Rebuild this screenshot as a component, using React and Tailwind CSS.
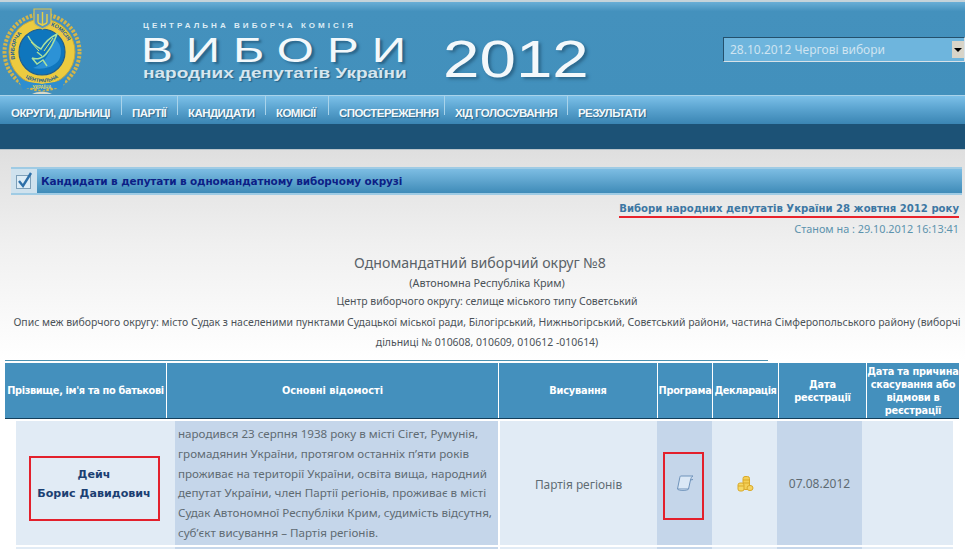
import React from "react";

const navItems = [
  { label: "ОКРУГИ, ДІЛЬНИЦІ", width: "w-[121px]" },
  { label: "ПАРТІЇ", width: "w-[56px]" },
  { label: "КАНДИДАТИ", width: "w-[88px]" },
  { label: "КОМІСІЇ", width: "w-[63px]" },
  { label: "СПОСТЕРЕЖЕННЯ", width: "w-[116px]" },
  { label: "ХІД ГОЛОСУВАННЯ", width: "w-[123px]" },
  { label: "РЕЗУЛЬТАТИ", width: "w-[90px]" },
];

const Logo = () => (
  <svg width="84" height="94" viewBox="0 0 84 94" className="shrink-0">
    <defs>
      <path id="ringLeft" d="M15 60 A27.5 27.5 0 0 1 38 23" />
      <path id="ringRight" d="M46 23 A27.5 27.5 0 0 1 67 60" />
      <path id="ringBottom" d="M12 58 A30 30 0 0 0 70 58" />
    </defs>
    <circle cx="41" cy="50" r="37.5" fill="none" stroke="#d3b54a" strokeWidth="4" strokeDasharray="2.5 1.5" />
    <circle cx="41" cy="50" r="33" fill="#eccb3f" stroke="#c9a93a" strokeWidth="1" />
    <circle cx="41" cy="50" r="23" fill="#0f76bd" stroke="#1f5f90" strokeWidth="1.2" />
    <path d="M52 36 C60 40 62 50 58 58 C52 66 40 68 32 66 C44 62 50 50 52 36Z" fill="#2c92d6" />
    <path d="M27 34 C30 40 34 44 40 47 C44 40 50 35 56 32 C53 40 50 46 45 52 C42 56 36 58 31 56 M31 56 L36 62 L42 58 L46 64 M36 50 L41 54" fill="none" stroke="#a9e0a0" strokeWidth="1.5" />
    <path d="M30 40 L38 49 M52 36 L43 49" fill="none" stroke="#d8ea70" strokeWidth="1" />
    <text fontFamily="'Liberation Sans', sans-serif" fontSize="5.5" fontWeight="700" fill="#1d5e96">
      <textPath href="#ringLeft" startOffset="6%">ВИБОРЧА</textPath>
    </text>
    <text fontFamily="'Liberation Sans', sans-serif" fontSize="5.5" fontWeight="700" fill="#1d5e96">
      <textPath href="#ringRight" startOffset="8%">КОМІСІЯ</textPath>
    </text>
    <text fontFamily="'Liberation Sans', sans-serif" fontSize="5" fontWeight="700" fill="#1d5e96" textAnchor="middle">
      <textPath href="#ringBottom" startOffset="50%">ЦЕНТРАЛЬНА</textPath>
    </text>
    <path d="M33 7 H50 V20 C50 24 44 25 41.5 27 C39 25 33 24 33 20Z" fill="#5b95bd" stroke="#d8c24e" strokeWidth="1.2" />
    <path d="M41.5 10 V24 M37 12 V20 C37 22 40 22 41.5 23 C43 22 46 22 46 20 V12" stroke="#e6cf45" strokeWidth="1.4" fill="none" />
    <path d="M16 75 C24 81 32 80 41 82 C50 80 58 81 66 75 L60 88 C52 84 47 86 41 89 C35 86 30 84 22 88Z" fill="#2e8ed0" />
    <text x="41" y="87" textAnchor="middle" fontFamily="'Liberation Sans', sans-serif" fontSize="4.5" fontWeight="700" fill="#e8d860">УКРАЇНА</text>
    <path d="M31 92 C37 89 45 89 51 92Z" fill="#d8d8c8" />
  </svg>
);

const CheckIcon = () => (
  <svg width="20" height="20" viewBox="0 0 20 20">
    <rect x="2.5" y="4.5" width="14" height="13" fill="#dcecf6" stroke="#7d9fb8" />
    <path d="M5 10 L9 15 L17 2" fill="none" stroke="#2d6fa8" strokeWidth="2.4" />
  </svg>
);

const ScrollIcon = () => (
  <svg width="18" height="18" viewBox="0 0 18 18">
    <path d="M4.5 2 H17 C15.5 2.5 15 4 14.5 6 L12.5 15 H1.5 L3.5 5 C3.8 3.5 4 2.5 4.5 2Z" fill="#dbe8f6" stroke="#6f93bb" />
    <path d="M1.5 15 C2 16.8 12 16.8 12.5 15" fill="#b8cde4" stroke="#6f93bb" />
    <path d="M14.5 6 L17 5.5" stroke="#6f93bb" />
  </svg>
);

const CoinsIcon = () => (
  <svg width="18" height="18" viewBox="0 0 18 18">
    <rect x="7" y="1.5" width="6.5" height="13" rx="2" fill="#f4cf55" stroke="#d9a92a" />
    <rect x="2" y="8" width="6" height="8" rx="2" fill="#f6d865" stroke="#d9a92a" />
    <ellipse cx="14" cy="13" rx="3" ry="2.6" fill="#f4d260" stroke="#d9a92a" />
    <path d="M7 5 H13.5 M7 8 H13.5 M2 11 H8" stroke="#d9a92a" />
  </svg>
);

const HeaderCell = ({ className = "", children }) => (
  <div className={`flex items-center justify-center bg-[#4490bd] text-center font-bold text-white ${className}`}>
    {children}
  </div>
);

export default function App() {
  return (
    <div className="h-[549px] w-[965px] overflow-hidden bg-white font-['Noto_Sans',sans-serif] text-[12px] text-[#5f6b73]">
      {/* шапка */}
      <div className="flex h-[95px] items-start border-t-2 border-[#c5d3da] bg-[linear-gradient(#69aed6,#4491bd_10%,#4290bc)] pl-px">
        <Logo />
        <div className="ml-[58px] w-[280px] pt-[17px] font-['Liberation_Sans',sans-serif] text-[#dcecf5]">
          <div className="h-[13px] text-[8px] leading-[13px] font-bold tracking-[3.05px] whitespace-nowrap">ЦЕНТРАЛЬНА ВИБОРЧА КОМІСІЯ</div>
          <div className="mt-[3px] h-[30px] origin-left -translate-x-[2px] scale-x-[1.36] text-[35px] leading-[30px] tracking-[9.6px] whitespace-nowrap text-[#f3f8fb] [text-shadow:2px_2px_2px_#2a6488]">ВИБОРИ</div>
          <div className="mt-[1px] h-[15px] origin-left scale-x-[1.31] text-[14.5px] leading-[15px] font-bold whitespace-nowrap text-[#d6e6ef] [text-shadow:1px_1px_1px_#2a6488]">народних депутатів України</div>
        </div>
        <div className="ml-[20px] origin-left scale-x-[1.26] pt-[27px] font-['Liberation_Sans',sans-serif] text-[52px] leading-[60px] whitespace-nowrap text-[#f3f8fb] [text-shadow:2px_2px_3px_#2a6488]">2012</div>
        <div className="ml-auto mt-[35px] flex h-[25px] w-[242px] items-center border border-t-[#24506c] border-r-[#d8e2e8] border-b-[#d8e2e8] border-l-[#24506c] bg-[#6eb5dd] pl-[6px] text-[12px] text-[#cfe4f1]">
          <span className="flex-1 pt-px">28.10.2012 Чергові вибори</span>
          <span className="flex h-[17px] w-[12px] items-center justify-center bg-[#d8d4c8]">
            <span className="h-0 w-0 border-x-[4px] border-t-[4px] border-x-transparent border-t-black" />
          </span>
        </div>
      </div>

      {/* меню */}
      <div className="flex h-[29px] items-start border-t border-[#a9d3ea] bg-[linear-gradient(#7cc0e8,#5ba4d0_45%,#3a85b3)] pl-px font-['Liberation_Sans',sans-serif] text-[11.5px] leading-[29px] font-bold tracking-[-0.55px] whitespace-nowrap text-[#f2f8fb]">
        {navItems.map((item, i) => (
          <div key={item.label} className={`flex h-[19px] items-center pt-[10px] pl-[10px] ${item.width} ${i < navItems.length - 1 ? "border-r border-[#a9d3ea]" : ""}`}>
            <span className="translate-y-[3px] [text-shadow:1px_1px_1px_#2a6488]">{item.label}</span>
          </div>
        ))}
      </div>
      <div className="h-[26px] border-b border-[#b9c4ca] bg-[#1c5276]" />

      {/* контент */}
      <div className="bg-[linear-gradient(#dfdfdf,#f0f0f0_45%,#ffffff)] pt-[17px]">
        <div className="mr-[3px] ml-[11px] flex h-[28px] border-y-2 border-[#9fcbe4] bg-[linear-gradient(#7dbde3,#3f8bb8)]">
          <div className="flex w-[26px] items-center justify-center bg-[#cfe2ee]">
            <CheckIcon />
          </div>
          <div className="pl-[4px] font-['DejaVu_Sans',sans-serif] text-[10.5px] leading-[24px] font-bold tracking-[-0.13px] text-[#0c1f86]">Кандидати в депутати в одномандатному виборчому окрузі</div>
        </div>

        <div className="pr-[6px] text-right">
          <div className="mt-[6px] inline-block h-[17px] border-b-2 border-[#e8232c] font-['DejaVu_Sans',sans-serif] text-[10.1px] leading-[15px] font-bold text-[#3d77a3]">Вибори народних депутатів України 28 жовтня 2012 року</div>
          <div className="mt-[2px] h-[17px] text-[10.85px] leading-[17px] text-[#5c93ad]">Станом на : 29.10.2012 16:13:41</div>
        </div>

        <div className="mt-[14px] pr-[3px] pl-[12px] text-center text-[10.45px] leading-[20px] text-[#4b5258]">
          <div className="pr-[14px] text-[14.15px] leading-[24px] text-[#5a6268]">Одномандатний виборчий округ №8</div>
          <div className="text-[10.8px] leading-[16px]">(Автономна Республіка Крим)</div>
          <div>Центр виборчого округу: селище міського типу Советський</div>
          <div className="mt-[1px]">Опис меж виборчого округу: місто Судак з населеними пунктами Судацької міської ради, Білогірський, Нижньогірський, Совєтський райони, частина Сімферопольського району (виборчі дільниці № 010608, 010609, 010612 -010614)</div>
        </div>

        <div className="mt-[8px] ml-[5px] h-px w-[763px] bg-[#4a90b0]" />
      </div>

      {/* таблиця */}
      <div className="pt-[2px] pl-[5px]">
        <div className="grid h-[56px] w-[954px] grid-cols-[161px_331px_158px_54px_65px_87px_92px] gap-x-px border-b border-[#123f5c] font-['DejaVu_Sans',sans-serif] text-[9.8px] leading-[13px] tracking-[-0.2px]">
          <HeaderCell className="tracking-[-0.35px] whitespace-nowrap">Прізвище, ім'я та по батькові</HeaderCell>
          <HeaderCell className="tracking-normal">Основні відомості</HeaderCell>
          <HeaderCell>Висування</HeaderCell>
          <HeaderCell className="tracking-[-0.3px]">Програма</HeaderCell>
          <HeaderCell className="tracking-[-0.45px]">Декларація</HeaderCell>
          <HeaderCell>Дата<br />реєстрації</HeaderCell>
          <HeaderCell>Дата та причина скасування або відмови в реєстрації</HeaderCell>
        </div>

        <div className="mt-[2px] ml-[11px] grid h-[124px] w-[937px] grid-cols-[159px_323px_159px_55px_65px_85px_91px] items-stretch">
          <div className="flex items-center justify-center bg-[#e1ebf5]">
            <div className="mt-[11px] mr-[3px] flex h-[65px] w-[131px] flex-col items-center justify-center border-2 border-[#e3202c] pb-[9px] font-['DejaVu_Sans',sans-serif] text-[11.1px] leading-[19px] font-bold text-[#1b3f72]">
              <span>Дейч</span>
              <span>Борис Давидович</span>
            </div>
          </div>
          <div className="bg-[#c5d6ea] pt-[3px] pl-[3px] text-[11.6px] leading-[19.8px] whitespace-nowrap">
            народився 23 серпня 1938 року в місті Сігет, Румунія,<br />
            громадянин України, протягом останніх п’яти років<br />
            проживає на території України, освіта вища, народний<br />
            депутат України, член Партії регіонів, проживає в місті<br />
            Судак Автономної Республіки Крим, судимість відсутня,<br />
            суб’єкт висування – Партія регіонів.
          </div>
          <div className="ml-[2px] flex items-center justify-center bg-[#e1ebf5] pt-[4px] text-[11.9px]">Партія регіонів</div>
          <div className="flex items-center justify-center bg-[#c5d6ea]">
            <div className="mt-[5px] mr-[3px] flex h-[68px] w-[41px] items-center justify-center border-2 border-[#e3202c]">
              <span className="mb-[5px] ml-[4px]"><ScrollIcon /></span>
            </div>
          </div>
          <div className="flex items-center justify-center bg-[#e1ebf5] pt-[2px]"><CoinsIcon /></div>
          <div className="flex items-center justify-center bg-[#c5d6ea] pt-[2px] text-[12px]">07.08.2012</div>
          <div className="bg-[#e1ebf5]" />
        </div>
        <div className="mt-[2px] ml-[11px] grid h-[10px] w-[937px] grid-cols-[159px_323px_159px_55px_65px_85px_91px]">
          <div className="bg-[#e1ebf5]" />
          <div className="bg-[#c5d6ea]" />
          <div className="ml-[2px] bg-[#e1ebf5]" />
          <div className="bg-[#c5d6ea]" />
          <div className="bg-[#e1ebf5]" />
          <div className="bg-[#c5d6ea]" />
          <div className="bg-[#e1ebf5]" />
        </div>
      </div>
    </div>
  );
}
